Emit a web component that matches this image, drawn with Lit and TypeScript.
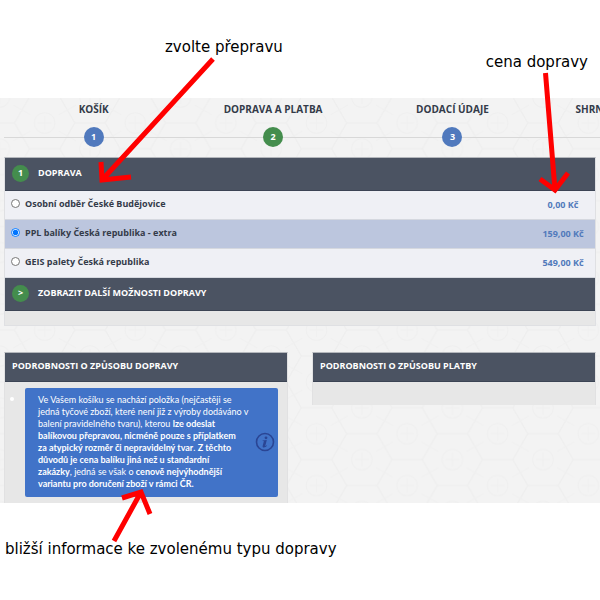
import { LitElement, html, css, svg } from "lit";
import { customElement, property, state } from "lit/decorators.js";
import { classMap } from "lit/directives/class-map.js";

interface Option {
  id: string;
  name: string;
  price: string;
}

const STEPS = [
  { label: "KOŠÍK", tone: "blue" },
  { label: "DOPRAVA A PLATBA", tone: "green" },
  { label: "DODACÍ ÚDAJE", tone: "blue" },
  { label: "SHRNUTÍ OBJEDNÁVKY", tone: "blue" },
];

const OPTIONS: Option[] = [
  { id: "pickup", name: "Osobní odběr České Budějovice", price: "0,00 Kč" },
  { id: "ppl", name: "PPL balíky Česká republika - extra", price: "159,00 Kč" },
  { id: "geis", name: "GEIS palety Česká republika", price: "549,00 Kč" },
];

/* Honeycomb wallpaper with a crossed circle in every cell. */
@customElement("hex-backdrop")
export class HexBackdrop extends LitElement {
  static styles = css`
    :host { display: block; }
    .art { display: block; width: 100%; height: 100%; }
  `;
  private cell(x: number, y: number) {
    return svg`
      <path d="M${x - 15} ${y - 26}h30l15 26l-15 26h-30l-15 -26z" stroke="#eeeeee" stroke-width="1"/>
      <circle cx=${x} cy=${y} r="10.3" stroke="#efefef"/>
      <path d="M${x - 7} ${y}h14M${x} ${y - 7}v14M${x - 24} ${y - 14}l10 6M${x + 24} ${y - 14}l-10 6M${x - 24} ${y + 14}l10 -6M${x + 24} ${y + 14}l-10 -6" stroke="#f0f0f0"/>`;
  }
  render() {
    return html`<svg class="art" aria-hidden="true">
      <defs>
        <pattern id="hex" width="90.6" height="51.8" patternUnits="userSpaceOnUse" patternTransform="translate(-.6 -1)">
          <g fill="none">
            ${this.cell(0, 0)}${this.cell(90.6, 0)}${this.cell(0, 51.8)}${this.cell(90.6, 51.8)}${this.cell(45.3, 25.9)}
          </g>
        </pattern>
      </defs>
      <rect width="100%" height="100%" fill="#f3f3f3"/>
      <rect width="100%" height="100%" fill="url(#hex)"/>
    </svg>`;
  }
}

@customElement("checkout-steps")
export class CheckoutSteps extends LitElement {
  static styles = css`
    :host { display: block; }
    .steps {
      display: flex;
      list-style: none;
      margin: 0;
      padding: 0;
      background: linear-gradient(#d8d8d8, #d8d8d8) 0 39px / 100% 1px no-repeat;
    }
    .step {
      flex: 0 0 30%;
      display: flex;
      flex-direction: column;
      align-items: center;
      gap: 8px;
      padding-top: 1px;
      font-size: 10px;
      line-height: 20px;
      font-weight: 700;
      color: #343b49;
      white-space: nowrap;
    }
    .dot {
      width: 20px;
      height: 20px;
      border-radius: 50%;
      color: #fff;
      font-size: 9px;
      text-align: center;
    }
    .blue { background: #5079bd; }
    .green { background: #448d4d; }
  `;
  render() {
    return html`<ol class="steps">
      ${STEPS.map(
        (s, i) => html`<li class="step">
          <span>${s.label}</span>
          <span class=${classMap({ dot: true, [s.tone]: true })}>${i + 1}</span>
        </li>`,
      )}
    </ol>`;
  }
}

@customElement("shipping-options")
export class ShippingOptions extends LitElement {
  @property({ attribute: false }) options: Option[] = [];
  @state() private selected = "ppl";

  static styles = css`
    :host {
      display: block;
      background: #e7e7e7;
      border: 1px solid #dfe0e3;
      border-top-color: #b4b7bc;
      box-sizing: border-box;
      padding-bottom: 14px;
      font-weight: 700;
    }
    .bar {
      display: flex;
      align-items: center;
      gap: 9px;
      width: 100%;
      height: 33px;
      box-sizing: border-box;
      margin: 0;
      padding: 0 7px 2px;
      border: 0;
      border-bottom: 1px solid #3c4454;
      background: #4b5362;
      color: #fff;
      font: inherit;
      font-size: 9px;
      line-height: 16px;
      text-align: left;
    }
    .badge {
      flex: none;
      width: 17px;
      height: 17px;
      border-radius: 50%;
      background: #448d4d;
      text-align: center;
    }
    .group { margin: 0; padding: 0; border: 0; min-width: 0; }
    .row {
      display: flex;
      align-items: center;
      gap: 5px;
      height: 29px;
      box-sizing: border-box;
      padding-left: 6px;
      border-bottom: 1px solid #d5d8df;
      background: #eff0f5;
      color: #343b49;
      font-size: 9px;
      line-height: 16px;
    }
    .on { background: #bcc6de; }
    .radio { flex: none; width: 9px; height: 9px; margin: 0 0 4px; }
    .name { flex: 1; padding-bottom: 2px; }
    .price { flex: none; width: 64px; text-align: center; color: #527abb; }
  `;
  render() {
    return html`
      <div class="bar"><span class="badge">1</span><span id="title">DOPRAVA</span></div>
      <fieldset class="group" aria-labelledby="title">
        ${this.options.map(
          (o) => html`<label class=${classMap({ row: true, on: o.id === this.selected })}>
            <input class="radio" type="radio" name="shipping" .checked=${o.id === this.selected}
              @change=${() => (this.selected = o.id)} />
            <span class="name">${o.name}</span>
            <span class="price">${o.price}</span>
          </label>`,
        )}
      </fieldset>
      <button class="bar" type="button"><span class="badge">&gt;</span><span>ZOBRAZIT DALŠÍ MOŽNOSTI DOPRAVY</span></button>
    `;
  }
}

@customElement("detail-panel")
export class DetailPanel extends LitElement {
  @property() heading = "";
  static styles = css`
    :host {
      display: block;
      box-sizing: border-box;
      background: #e7e7e7;
      border: 1px solid #e1e1e2;
      border-top-color: #b4b7bc;
      border-bottom: 0;
    }
    .title {
      margin: 0;
      height: 29px;
      box-sizing: border-box;
      padding: 0 7px;
      border-bottom: 1px solid #3c4454;
      background: #4b5362;
      color: #fff;
      font-size: 9px;
      font-weight: 700;
      line-height: 26px;
    }
    .body { min-height: 23px; }
  `;
  render() {
    return html`<h2 class="title">${this.heading}</h2><div class="body"><slot></slot></div>`;
  }
}

@customElement("app-root")
export class AppRoot extends LitElement {
  static styles = css`
    :host {
      display: block;
      position: relative;
      overflow: hidden;
      background: #fff;
      font-family: "Open Sans", "Noto Sans", sans-serif;
    }
    .note {
      margin: 0;
      color: #000;
      font-family: "DejaVu Sans", sans-serif;
      font-size: 15px;
      line-height: 20px;
      white-space: nowrap;
    }
    .top {
      display: flex;
      justify-content: space-between;
      height: 98px;
      box-sizing: border-box;
      padding: 37px 12px 0 165px;
    }
    .low { padding-top: 15px; }
    .bottom { padding: 36px 5px 41px; }
    .shop {
      position: relative;
      overflow: hidden;
      padding: 0 4px;
    }
    .backdrop { position: absolute; inset: 0; }
    .content { position: relative; }
    .steps { margin-right: -6px; margin-bottom: 10px; }
    .details {
      display: grid;
      grid-template-columns: 1fr 1fr;
      gap: 24px;
      align-items: start;
      margin-top: 26px;
    }
    .list {
      margin: 0;
      padding: 6px 9px 6px 20px;
      color: #fff;
      font-family: Lato, "Open Sans", sans-serif;
      font-size: 9px;
    }
    .item { line-height: 12px; padding: 0; }
    .item::marker { font-family: "Noto Sans", sans-serif; font-size: 11px; }
    .info {
      display: flex;
      align-items: center;
      justify-content: space-between;
      border-radius: 2px;
      background: #4173c8;
      padding: 6px 3px 7px 13px;
    }
    .text { margin: 0; line-height: 12px; white-space: nowrap; }
    .icon { flex: none; width: 20px; height: 20px; }
    .arrows { position: absolute; left: 0; top: 0; width: 600px; height: 600px; pointer-events: none; }
  `;
  render() {
    return html`
      <header class="top">
        <p class="note">zvolte přepravu</p>
        <p class="note low">cena dopravy</p>
      </header>
      <main class="shop">
        <hex-backdrop class="backdrop"></hex-backdrop>
        <div class="content">
          <checkout-steps class="steps"></checkout-steps>
          <shipping-options .options=${OPTIONS}></shipping-options>
          <div class="details">
            <detail-panel heading="PODROBNOSTI O ZPŮSOBU DOPRAVY">
              <ul class="list">
                <li class="item">
                  <div class="info">
                    <p class="text">
                      Ve Vašem košíku se nachází položka (nejčastěji se<br />
                      jedná tyčové zboží, které není již z výroby dodáváno v<br />
                      balení pravidelného tvaru), kterou <b>lze odeslat<br />
                      balíkovou přepravou, nicméně pouze s příplatkem<br />
                      za atypický rozměr či nepravidelný tvar</b>. <b>Z těchto<br />
                      důvodů je cena balíku jiná než u standardní<br />
                      zakázky</b>, jedná se však o <b>cenově nejvýhodnější<br />
                      variantu pro doručení zboží v rámci ČR.</b>
                    </p>
                    <svg class="icon" viewBox="0 0 20 20" aria-hidden="true">
                      <circle cx="10" cy="10" r="8.5" fill="none" stroke="#2a4594" stroke-width="1.6" />
                      <circle cx="11" cy="5.8" r="1.4" fill="#2a4594" />
                      <path d="M7.6 8.5l4.2-.5-1.5 5.8c-.1.5.4.4 1.4-.6l.4.4c-1.2 1.5-2.2 1.9-3.2 1.9-1.2 0-1.5-.7-1.2-1.8l1.1-4.1c.1-.4 0-.5-1.2-.6z" fill="#2a4594" />
                    </svg>
                  </div>
                </li>
              </ul>
            </detail-panel>
            <detail-panel heading="PODROBNOSTI O ZPŮSOBU PLATBY"></detail-panel>
          </div>
        </div>
      </main>
      <footer class="bottom"><p class="note">bližší informace ke zvolenému typu dopravy</p></footer>
      <svg class="arrows" viewBox="0 0 600 600" fill="none" stroke="#f00" stroke-width="5" aria-hidden="true">
        <path d="M213 59L102 180M101 162L102 180L131 177" />
        <path d="M545.5 73L555 190M540 179L555 190L568 173" />
        <path d="M114 541L141 492M122 498L141 492L150 514" />
      </svg>
    `;
  }
}
